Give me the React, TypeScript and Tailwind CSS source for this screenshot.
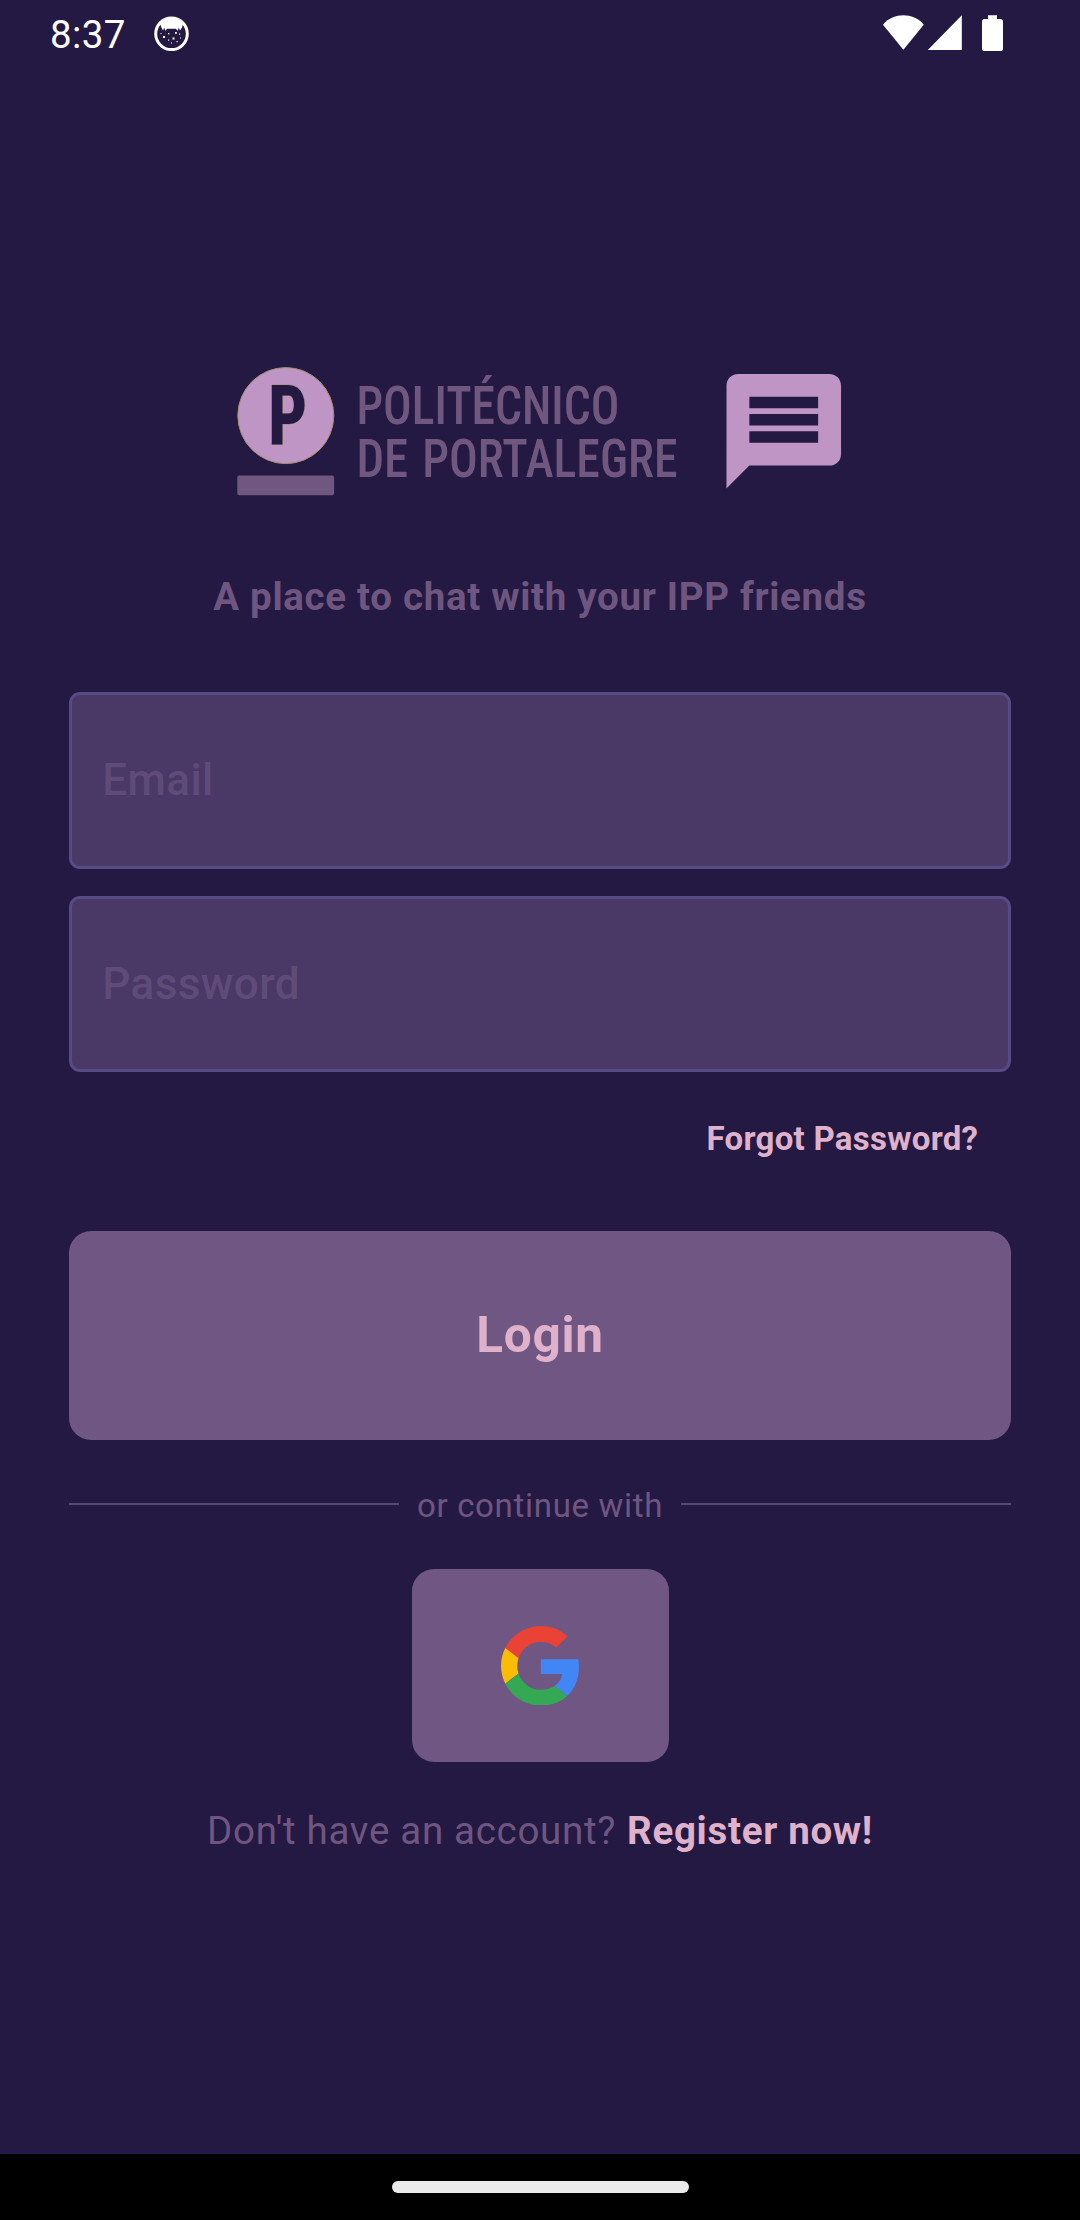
import React from "react";

function StatusBar() {
  return (
    <header className="flex h-[66px] shrink-0 items-center justify-between pl-[50px] pr-[77px] text-white">
      <div className="flex items-center gap-[28.5px]">
        <span className="pt-[3px] text-[38.5px] leading-[60px] tracking-[0.4px]">8:37</span>
        <svg width="35" height="35" viewBox="0 0 35 35" className="block">
          <circle cx="17.5" cy="17.8" r="15.8" fill="none" stroke="currentColor" strokeWidth="3" />
          <path
            d="M6 7.5 Q17.5 -2 29 7.5 L28 11.5 L26 14.5 L24.8 11.8 L23.6 15 L22 12.8 H13 L11.4 15 L10.2 11.8 L9 14.5 L7.4 11.5Z"
            fill="currentColor"
          />
          <g fill="currentColor">
            <rect x="9" y="20" width="2" height="2" />
            <rect x="14" y="17" width="1.3" height="1.3" />
            <rect x="18.5" y="21.5" width="2" height="2" />
            <rect x="21" y="16" width="1.8" height="1.8" />
            <rect x="25" y="17.5" width="1.2" height="1.2" />
            <rect x="14" y="23.5" width="1.2" height="1.2" />
            <rect x="17" y="26.5" width="1" height="1" />
            <rect x="22.5" y="25" width="1.2" height="1.2" />
            <rect x="26" y="21.5" width="1" height="1" />
            <rect x="6.5" y="17" width="1" height="1" />
          </g>
        </svg>
      </div>
      <svg width="120" height="37" viewBox="0 0 120 37" fill="currentColor" className="block">
        <path d="M20.4 34.8 L0 9.7 C5.6 3 13 0.3 20.4 0.3 S35.2 3 40.8 9.7Z" />
        <path d="M44.8 35 L78.8 0.3 V35Z" />
        <path d="M105 0.3h9v3.7h3.4a2.7 2.7 0 0 1 2.6 2.7V33.4a2.7 2.7 0 0 1-2.7 2.7H101.7a2.7 2.7 0 0 1-2.7-2.7V6.7a2.7 2.7 0 0 1 2.7-2.7H105Z" />
      </svg>
    </header>
  );
}

function SchoolLogo() {
  return (
    <svg width="487" height="137.5" viewBox="0 -0.6 487 137.5" className="block">
      <circle cx="57.8" cy="53" r="48" fill="#bf95c6" stroke="#a48f6c" strokeWidth="1" />
      <text
        x="40.2"
        y="82.4"
        fontFamily="Roboto Condensed, Roboto, sans-serif"
        fontWeight="800"
        fontSize="83"
        textLength="39"
        lengthAdjust="spacingAndGlyphs"
        fill="#241942"
        stroke="#a48f6c"
        strokeWidth="1"
        paintOrder="stroke"
      >
        P
      </text>
      <rect x="9.3" y="113" width="96.8" height="19.6" rx="2" fill="#6f5780" />
      <g fontFamily="Roboto Condensed, Roboto, sans-serif" fontWeight="500" fontSize="54" fill="#6f5780">
        <text x="128.4" y="61.5" textLength="263" lengthAdjust="spacingAndGlyphs">
          POLITÉCNICO
        </text>
        <text x="128.4" y="114.3" textLength="51.8" lengthAdjust="spacingAndGlyphs">
          DE
        </text>
        <text x="194.2" y="114.3" textLength="255.4" lengthAdjust="spacingAndGlyphs">
          PORTALEGRE
        </text>
      </g>
    </svg>
  );
}

function ChatIcon() {
  return (
    <svg width="137.5" height="137.5" viewBox="0 -0.08 24 24" fill="#bf95c6" className="block">
      <path d="M20 2H4c-1.1 0-1.99.9-1.99 2L2 22l4-4h14c1.1 0 2-.9 2-2V4c0-1.1-.9-2-2-2zm-2 12H6v-2h12v2zm0-3H6V9h12v2zm0-3H6V6h12v2z" />
    </svg>
  );
}

function GoogleIcon() {
  return (
    <svg width="78" height="79.6" viewBox="0 0 46.98 48" className="block">
      <path fill="#EA4335" d="M24 9.5c3.54 0 6.71 1.22 9.21 3.6l6.85-6.85C35.9 2.38 30.47 0 24 0 14.62 0 6.51 5.38 2.56 13.22l7.98 6.19C12.43 13.72 17.74 9.5 24 9.5z" />
      <path fill="#4285F4" d="M46.98 24.55c0-1.57-.15-3.09-.38-4.55H24v9.02h12.94c-.58 2.96-2.26 5.48-4.78 7.18l7.73 6c4.51-4.18 7.09-10.36 7.09-17.65z" />
      <path fill="#FBBC05" d="M10.53 28.59c-.48-1.45-.76-2.99-.76-4.59s.27-3.14.76-4.59l-7.98-6.19C.92 16.46 0 20.12 0 24c0 3.88.92 7.54 2.56 10.78l7.97-6.19z" />
      <path fill="#34A853" d="M24 48c6.48 0 11.93-2.13 15.89-5.81l-7.73-6c-2.15 1.45-4.92 2.3-8.16 2.3-6.26 0-11.57-4.22-13.47-9.91l-7.98 6.19C6.51 42.62 14.62 48 24 48z" />
    </svg>
  );
}

function Field({ label, type }: { label: string; type: string }) {
  return (
    <input
      type={type}
      placeholder={label}
      className="block h-[176.5px] w-full rounded-[11px] border-[3px] border-[#584a84] bg-[#4a3866] pl-[30.5px] pr-8 text-[44px] font-medium tracking-[0.41px] text-[#dfb1cb] outline-none placeholder:text-[#5f4b78] placeholder:opacity-100"
    />
  );
}

export default function App() {
  return (
    <div className="flex h-[2220px] w-[1080px] flex-col overflow-hidden bg-[#241942] font-['Roboto',sans-serif] antialiased">
      <StatusBar />

      <main className="flex flex-1 flex-col px-[68.75px] pt-[296px]">
        <div className="flex justify-center">
          <SchoolLogo />
          <ChatIcon />
        </div>

        <h1 className="mt-[69.5px] text-center text-[38.5px] font-bold leading-[55px] tracking-[0.6875px] text-[#6f5680]">
          A place to chat with your IPP friends
        </h1>

        <form className="mt-[68px] flex flex-col">
          <div className="flex flex-col gap-[27px]">
            <Field label="Email" type="text" />
            <Field label="Password" type="password" />
          </div>
          <a className="mt-[44px] self-end pr-[33px] text-[33px] font-bold leading-[46px] tracking-[0.275px] text-[#dfb1cb]">
            Forgot Password?
          </a>
          <button
            type="button"
            className="mt-[69px] h-[209px] w-full rounded-[22px] bg-[#705682] text-[49.5px] font-bold tracking-[0.6875px] text-[#dfb1cb]"
          >
            Login
          </button>
        </form>

        <div className="mt-[41px] flex items-center gap-[17.5px] text-[#6f5680]">
          <span className="mb-[2px] h-[2px] flex-1 bg-[#5c4570]" />
          <span className="pt-[1px] text-[33px] leading-[47px] tracking-[0.6875px]">or continue with</span>
          <span className="mb-[2px] h-[2px] flex-1 bg-[#5c4570]" />
        </div>

        <button
          type="button"
          className="mt-[40px] flex h-[193px] w-[257px] items-center justify-center self-center rounded-[22px] bg-[#705682]"
        >
          <GoogleIcon />
        </button>

        <p className="mt-[40.5px] flex justify-center gap-[11px] text-[38.5px] leading-[55px] tracking-[0.6875px] text-[#6f5680]">
          <span>Don't have an account?</span>
          <a className="font-bold text-[#dfb1cb]">Register now!</a>
        </p>
      </main>

      <footer className="flex h-[66px] shrink-0 items-center justify-center bg-black">
        <div className="h-[12px] w-[297px] rounded-full bg-[#ebebeb]" />
      </footer>
    </div>
  );
}
